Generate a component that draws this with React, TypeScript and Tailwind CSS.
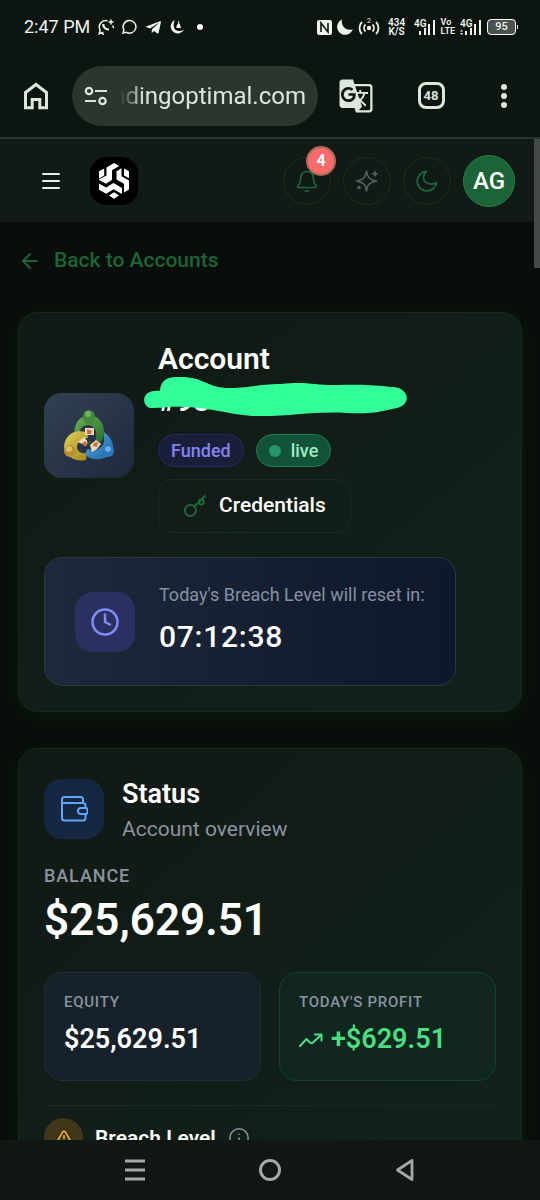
import React from 'react';
import { ArrowLeft, Clock, Info, Menu, TriangleAlert } from 'lucide-react';
import { FaTelegramPlane } from 'react-icons/fa';
import { MdGTranslate } from 'react-icons/md';

interface StatTileProps {
  label: string;
  className: string;
  children: React.ReactNode;
}

const SignalBars: React.FC<{ active?: boolean }> = ({ active }) => (
  <svg width="22" height="18" viewBox="0 0 22 18" fill="currentColor">
    <text x="0" y="9" fontSize="10" fontWeight="600">4G</text>
    <rect x="5" y="13" width="2" height="4" />
    <rect x="10" y="10" width="2" height="7" />
    <rect x="14" y="6" width="2" height="11" />
    <rect x="19" y="2" width="2" height="15" />
    {active && <path d="M0 13.5h3L1.5 11.500zM0 15h3L1.5 17z" />}
  </svg>
);

const StatusBar: React.FC = () => (
  <div className="flex h-[54px] shrink-0 items-center px-6 text-[#eef3ee]">
    <span className="mr-2 text-lg font-normal">2:47 PM</span>
    <div className="flex items-center gap-2">
      <svg width="16" height="16" viewBox="0 0 16 16" fill="none" stroke="currentColor" strokeWidth="1.500">
        <path d="M14.300 7A6.500 6.500 0 1 1 4.600 13.600L1.200 14.800l1-3.600A6.500 6.500 0 0 1 9.500 1.700" />
        <path d="M5.300 5c-.3 3 2.400 5.700 5.600 5.400" strokeWidth="2.200" />
        <path d="M13 .5v5M10.500 3h5" strokeWidth="1.500" />
      </svg>
      <svg width="15" height="16" viewBox="0 0 15 16" fill="none" stroke="currentColor" strokeWidth="1.500">
        <path d="M7.500 1.500a6.300 6.300 0 1 1-3 11.800L1 14l.9-3.100A6.300 6.300 0 0 1 7.500 1.500z" />
      </svg>
      <FaTelegramPlane size={17} />
      <svg width="15" height="16" viewBox="0 0 15 16" fill="currentColor">
        <path d="M5 1A7 7 0 1 0 14 10.500C10.500 13 5 12.500 4 8.500 3.400 5.800 3.800 3 5 1z" />
        <path d="M8.200 2v2.500C7 5.500 6.500 7 6.300 9h4.600c-.2-2-.7-3.500-1.700-4.500V2z" />
      </svg>
    </div>
    <span className="ml-3 size-[6px] rounded-full bg-white" />
    <div className="ml-auto flex items-center gap-[5px]">
      <svg width="15" height="15" viewBox="0 0 15 15">
        <rect width="15" height="15" rx="2" fill="currentColor" />
        <path d="M4 12V3l7 9V3" stroke="#0c150f" strokeWidth="1.600" fill="none" />
      </svg>
      <svg width="16" height="16" viewBox="0 0 16 16" fill="currentColor">
        <path d="M5 .5A8 8 0 1 0 15.800 10.200C10 12.500 3.500 7.500 5 .5z" />
      </svg>
      <svg width="22" height="20" viewBox="0 0 22 20" fill="none" stroke="currentColor" strokeWidth="1.800">
        <circle cx="11" cy="11" r="2.200" fill="currentColor" stroke="none" />
        <path d="M7.500 7.500a5 5 0 0 0 0 7M14.500 7.500a5 5 0 0 1 0 7M4 5a8.500 8.500 0 0 0 0 12M18 5a8.500 8.500 0 0 1 0 12" />
        <text x="9" y="6" fontSize="7" fill="currentColor" stroke="none">2</text>
      </svg>
      <span className="w-6 text-center text-[10px] leading-[9px] font-semibold">434<br />K/S</span>
      <SignalBars />
      <span className="text-[9px] leading-[9px] font-semibold">Vo<br />LTE</span>
      <SignalBars active />
      <span className="relative flex h-4 w-[29px] items-center justify-center rounded-sm border border-white bg-[#4b514d] text-[11px] font-medium after:absolute after:-right-[3px] after:h-1 after:w-px after:bg-white">
        95
      </span>
    </div>
  </div>
);

const BrowserBar: React.FC = () => (
  <div className="flex h-[85px] shrink-0 items-center border-b-2 border-[#2c342f] text-[#dce6dc]">
    <button aria-label="Home" className="flex w-[72px] shrink-0 justify-center">
      <svg width="26" height="28" viewBox="0 0 26 28" fill="none" stroke="currentColor" strokeWidth="3">
        <path d="M2.500 10.500 13 2.500l10.500 8v15.200h-6.700v-8.200H9.200v8.200H2.500z" />
      </svg>
    </button>
    <div className="flex h-[60px] min-w-0 flex-1 items-center gap-3 rounded-full bg-[#2d352f] px-3">
      <svg className="shrink-0" width="24" height="20" viewBox="0 0 24 20" fill="none" stroke="currentColor" strokeWidth="2.200">
        <circle cx="5" cy="5" r="3.200" />
        <path d="M11 5h12M1 15h11" />
        <circle cx="18.500" cy="15" r="3.200" />
      </svg>
      <input
        aria-label="Address"
        dir="rtl"
        readOnly
        value="ndingoptimal.com"
        className="min-w-0 flex-1 bg-transparent text-2xl outline-none [mask-image:linear-gradient(to_right,transparent,black_24px)]"
      />
    </div>
    <button aria-label="Translate" className="flex w-[76px] shrink-0 justify-center">
      <MdGTranslate size={36} />
    </button>
    <button aria-label="Open tabs" className="flex w-[74px] shrink-0 justify-center">
      <span className="flex size-[27px] items-center justify-center rounded-lg border-[3px] border-current text-[13px] font-bold">48</span>
    </button>
    <button aria-label="More options" className="flex w-[72px] shrink-0 flex-col items-center gap-[3px]">
      <span className="size-[6px] rounded-full bg-current" />
      <span className="size-[6px] rounded-full bg-current" />
      <span className="size-[6px] rounded-full bg-current" />
    </button>
  </div>
);

const Logo: React.FC = () => (
  <span className="flex size-12 items-center justify-center rounded-2xl bg-black">
    <svg width="32" height="36" viewBox="0 0 32 36" fill="#fff">
      <path d="M1 8.300 6.200 5.500v7L1 15.700z" />
      <path d="M8.500 4.500 16 0l5.200 3L14 7.300v9.500L8 20.700 1 17v-.5l7.500-4z" />
      <path d="m18.500 8.200 5-2.900v8L31 17.500v9l-5 3v-8.700l-7.500-4.300z" />
      <path d="m26 5.500 5 2.800v7l-5-2.800z" />
      <path d="m1 20.500 7 3.900 7.500-4.500 8.500 5v6.200l-8.500-4.800-7.300 4.500-7.200-4z" />
      <path d="m16 29.300 5 3.200-5 3.300-5-3.300z" />
    </svg>
  </span>
);

const AppHeader: React.FC = () => (
  <header className="flex h-[83px] shrink-0 items-center bg-[#111a15] pr-[25px] pl-[39px]">
    <button aria-label="Menu" className="mr-[27px] text-[#e8eee9]">
      <Menu size={24} strokeWidth={2} />
    </button>
    <Logo />
    <div className="ml-auto flex items-center gap-3">
      <button aria-label="Notifications" className="relative flex size-12 items-center justify-center rounded-full border border-[#183022] text-[#1c6a3f]">
        <svg width="22" height="24" viewBox="0 0 22 24" fill="none" stroke="currentColor" strokeWidth="1.600" strokeLinecap="round" strokeLinejoin="round">
          <path d="M11 2.500c-4 0-6 2.500-6.300 6-.3 4.500-.7 6-2.500 7.800-.8.900-.4 2.200.8 2.200h16c1.200 0 1.600-1.300.8-2.200-1.800-1.800-2.200-3.300-2.500-7.800-.3-3.500-2.300-6-6.300-6zM9.300 22h3.400" />
        </svg>
        <span className="absolute -top-3 -right-[6px] flex size-[30px] items-center justify-center rounded-full border-2 border-[#a66b5b] bg-[#f96a6a] text-base leading-none font-bold text-white">
          4
        </span>
      </button>
      <button aria-label="Assistant" className="flex size-12 items-center justify-center rounded-full border border-[#183022] text-[#59605c]">
        <svg width="24" height="24" viewBox="0 0 24 24" fill="none" stroke="currentColor" strokeWidth="1.600" strokeLinejoin="round">
          <path d="M11.500 2c.8 6.500 3 8.800 10 10-7 1.200-9.200 3.500-10 10-.8-6.500-3-8.800-10-10 7-1.200 9.200-3.500 10-10z" />
          <path d="M20 2v5.500M17.300 4.700h5.500" />
          <circle cx="4" cy="18.500" r="1" fill="currentColor" />
        </svg>
      </button>
      <button aria-label="Dark mode" className="flex size-12 items-center justify-center rounded-full border border-[#183022] text-[#1c6a3f]">
        <svg width="24" height="24" viewBox="0 0 24 24" fill="none" stroke="currentColor" strokeWidth="1.700" strokeLinejoin="round">
          <path d="M11.500 2.300A9.800 9.800 0 1 0 21.700 13.500c-4.500 3.500-13.500 1-13.200-5.500 0-2.300 1.300-4.200 3-5.700z" />
        </svg>
      </button>
      <button aria-label="Profile" className="flex size-[52px] items-center justify-center rounded-full border border-[#238048] bg-[#1c6437] text-2xl font-medium text-white">
        AG
      </button>
    </div>
  </header>
);

const PlatformLogo: React.FC = () => (
  <svg width="54" height="54" viewBox="0 0 54 54">
    <defs>
      <linearGradient id="green" x1="0" y1="0" x2="1" y2="1">
        <stop offset="0" stopColor="#6db35a" />
        <stop offset="1" stopColor="#286f27" />
      </linearGradient>
      <linearGradient id="yellow" x1="0" y1="0" x2="1" y2="1">
        <stop offset="0" stopColor="#dfd05b" />
        <stop offset="1" stopColor="#a4871b" />
      </linearGradient>
      <linearGradient id="blue" x1="0" y1="0" x2="1" y2="1">
        <stop offset="0" stopColor="#5aa9df" />
        <stop offset="1" stopColor="#19639f" />
      </linearGradient>
    </defs>
    <path d="M12 27C12 14 17 7 27 6c10 1 16 8 15 20-1 6-6 10-9 7 3-8 1-16-6-17-6 0-9 3-10 9z" fill="url(#green)" />
    <path d="M17 22C7 23 2 30 2 39c2 9 11 14 22 12l1-7c-6 1-10-2-10-6s4-8 11-9l-1-6z" fill="url(#yellow)" />
    <path d="M42 23c7 5 10 12 9 18-3 8-14 12-25 7-3-2-3-6 0-8 7 3 15-1 16-7z" fill="url(#blue)" />
    <path d="m16 33 6-5 4 5-2 4M28 36l6-5 5 4-4 5-5 3zM23 19h9v7h-9z" fill="#e9dbb8" />
    <path d="m20 34 4-2 1 4-3 1zM32 34l4-1-1 5-4-1zM25 20l5 2-1 3h-4z" fill="#c96a45" />
    <path d="m25 32 5 0-3 5z" fill="#315029" />
    <ellipse cx="27" cy="8" rx="6" ry="7" fill="#438a36" />
    <circle cx="26" cy="5" r="3" fill="#6fb45e" />
    <circle cx="8" cy="42" r="6" fill="#b8932d" />
    <circle cx="7" cy="40" r="3" fill="#ddbe68" />
    <circle cx="46" cy="42" r="6" fill="#2a78bd" />
    <circle cx="46" cy="40" r="3" fill="#67aee3" />
  </svg>
);

const Scribble: React.FC = () => (
  <svg className="absolute top-[38px] -left-[15px]" width="264" height="42" viewBox="0 0 264 42" aria-hidden="true">
    <path
      d="M17 14C18 5 23 1 34 1 62 0 62 12 87 12c22 0 27-4 51-4 24-3 32 1 54 1 20 0 27-1 56 2 17-1 22 17 6 21-23 5-29 6-50 5-35-2-57 4-95 3-25-2-39-8-67-9-17-1-22 1-35 1-9-3-9-19 10-17z"
      fill="#32ff9a"
    />
  </svg>
);

const AccountCard: React.FC = () => (
  <section className="flex flex-col gap-6 rounded-[20px] border border-[#172a20] bg-linear-to-br from-[#111914] to-[#12221b] p-[25px] shadow-[0_4px_24px_rgba(16,60,36,0.25)]">
    <div className="flex items-center gap-6">
      <div className="flex h-[85px] w-[90px] shrink-0 items-center justify-center rounded-[18px] bg-linear-to-br from-[#334155] to-[#1e293b]">
        <PlatformLogo />
      </div>
      <div className="flex flex-col items-start gap-3">
        <h1 className="relative text-[30px] leading-[42px] font-semibold text-white">
          Account<br />#98
          <Scribble />
        </h1>
        <div className="flex gap-3">
          <span className="flex h-[33px] items-center rounded-full border border-[#29286a] bg-[#1b1e38] px-3 text-lg font-medium text-[#8085f2]">
            Funded
          </span>
          <span className="flex h-[33px] items-center gap-[10px] rounded-full border border-[#237e59] bg-[#115238] px-3 text-lg font-medium text-[#9debc2]">
            <span className="size-3 rounded-full bg-[#25966a]" />
            live
          </span>
        </div>
        <button className="flex h-[54px] items-center gap-3 rounded-[14px] border border-[#192c21] px-6 text-[21px] font-medium text-white">
          <svg width="24" height="24" viewBox="0 0 24 24" fill="none" stroke="#1e6b40" strokeWidth="1.800" strokeLinecap="round">
            <circle cx="7.500" cy="16.500" r="5.600" />
            <path d="M11.500 12.500 22 2" />
            <circle cx="18.300" cy="8" r="2.500" />
          </svg>
          Credentials
        </button>
      </div>
    </div>
    <div className="flex h-[129px] w-fit items-center gap-6 rounded-[18px] border border-[#2b3748] bg-linear-to-r from-[#1e293b] to-[#0f172a] px-[30px]">
      <span className="flex size-[60px] shrink-0 items-center justify-center rounded-[18px] bg-[#2c3060] text-[#818cf8]">
        <Clock size={30} strokeWidth={2} />
      </span>
      <div>
        <p className="text-lg leading-[27px] text-[#8591a3]">Today's Breach Level will reset in:</p>
        <p className="mt-1 text-[30px] leading-[50px] font-medium tracking-wide text-white">07:12:38</p>
      </div>
    </div>
  </section>
);

const StatTile: React.FC<StatTileProps> = ({ label, className, children }) => (
  <div className={`flex flex-1 flex-col rounded-[18px] border px-[19px] py-[18px] ${className}`}>
    <p className="text-[15px] leading-[22px] font-medium tracking-wider text-[#8b939f] uppercase">{label}</p>
    <p className="mt-1 flex items-center gap-2 text-[27px] leading-[45px] font-semibold">{children}</p>
  </div>
);

const StatusCard: React.FC = () => (
  <section className="rounded-[20px] border border-[#172a20] bg-linear-to-br from-[#111914] to-[#12221b] p-[25px] shadow-[0_4px_24px_rgba(16,60,36,0.25)]">
    <div className="flex items-center gap-[18px]">
      <span className="flex size-[60px] items-center justify-center rounded-[18px] bg-[#162841]">
        <svg width="28" height="28" viewBox="0 0 28 28" fill="none" stroke="#60a5fa" strokeWidth="2" strokeLinecap="round" strokeLinejoin="round">
          <path d="M23 8V4.500C23 3 22 2 20.500 2h-16C3 2 2 3 2 4.500V23c0 1.500 1 2.500 2.500 2.500h18.500c1.500 0 2.500-1 2.500-2.500v-3.500M25.500 12.500v-2C25.500 9 24.500 8 23 8H2" />
          <path d="M21 13h4.500a2 2 0 0 1 2 2v2a2 2 0 0 1-2 2H21a3 3 0 0 1 0-6z" />
        </svg>
      </span>
      <div>
        <h2 className="text-[27px] leading-10 font-semibold text-white">Status</h2>
        <p className="text-[21px] leading-[30px] text-[#8b939f]">Account overview</p>
      </div>
    </div>
    <p className="mt-[18px] text-lg leading-[27px] font-medium tracking-wider text-[#8b939f] uppercase">Balance</p>
    <p className="mt-1 text-[44px] leading-[55px] font-semibold text-white">$25,629.51</p>
    <div className="mt-6 flex gap-[18px]">
      <StatTile label="Equity" className="border-[#222e37] bg-[#17212a] text-white">
        $25,629.51
      </StatTile>
      <StatTile label="Today's Profit" className="border-[#14432f] bg-[#10261f] text-[#4ade80]">
        <svg width="24" height="14" viewBox="0 0 24 14" fill="none" stroke="currentColor" strokeWidth="2" strokeLinecap="round" strokeLinejoin="round">
          <path d="m1 13 6.500-7 3.500 3.500c1 1 2 1 3 0L22 2M16 1.500h6.500v6" />
        </svg>
        +$629.51
      </StatTile>
    </div>
    <div className="mt-6 flex items-center gap-3 border-t border-[#1b2823] pt-3">
      <span className="flex size-[39px] items-center justify-center rounded-full bg-[#41361a] text-[#fbbf24]">
        <TriangleAlert size={18} />
      </span>
      <h3 className="text-[21px] leading-[30px] font-semibold text-white">Breach Level</h3>
      <button aria-label="About breach level" className="text-[#8b939f]">
        <Info size={22} strokeWidth={1.7} />
      </button>
    </div>
  </section>
);

const NavigationBar: React.FC = () => (
  <nav className="flex h-[60px] shrink-0 justify-center bg-[#111814] text-[#a4aaa5]">
    <button aria-label="Recent apps" className="flex w-1/4 items-center justify-center">
      <svg width="22" height="24" viewBox="0 0 22 24" stroke="currentColor" strokeWidth="3">
        <path d="M1 3h20M1 12h20M1 21h20" />
      </svg>
    </button>
    <button aria-label="Home screen" className="flex w-1/4 items-center justify-center">
      <span className="size-[22px] rounded-full border-[3px] border-current" />
    </button>
    <button aria-label="Go back" className="flex w-1/4 items-center justify-center">
      <svg width="20" height="24" viewBox="0 0 20 24" fill="none" stroke="currentColor" strokeWidth="2.800" strokeLinejoin="round">
        <path d="M17 2.500v19L2.500 12z" />
      </svg>
    </button>
  </nav>
);

const App: React.FC = () => {
  return (
    <div className="flex h-screen flex-col bg-[#0c150f] font-[Roboto,sans-serif]">
      <StatusBar />
      <BrowserBar />
      <div className="relative flex min-h-0 flex-1 flex-col bg-[#090e0a]">
        <AppHeader />
        <main className="min-h-0 flex-1 overflow-y-auto px-[18px] [scrollbar-width:none]">
          <a href="#accounts" className="flex h-[78px] w-fit items-center gap-3 text-[21px] font-medium text-[#1c6437]">
            <ArrowLeft size={24} strokeWidth={1.8} />
            Back to Accounts
          </a>
          <div className="mt-3 flex flex-col gap-9">
            <AccountCard />
            <StatusCard />
          </div>
        </main>
        <span className="absolute top-0 right-0 h-[129px] w-[6px] bg-[#454a46]" />
      </div>
      <NavigationBar />
    </div>
  );
};

export default App;
